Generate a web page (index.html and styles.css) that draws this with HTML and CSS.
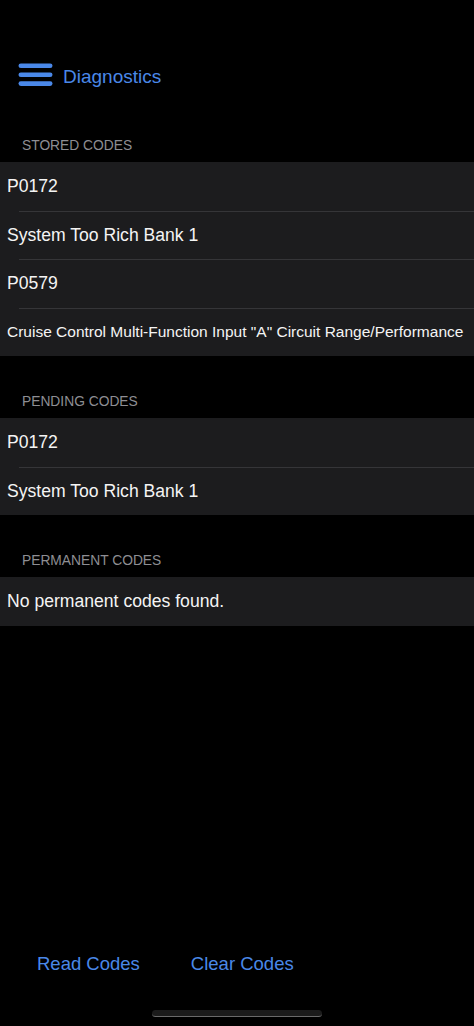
FILE: index.html
```html
<!DOCTYPE html>
<html lang="en">
<head>
<meta charset="utf-8">
<title>Diagnostics</title>
<link rel="stylesheet" href="styles.css">
</head>
<body>
<div class="screen">
  <header class="nav">
    <svg class="menu-icon" width="36" height="24" viewBox="0 0 36 24" aria-hidden="true">
      <rect x="0.5" y="0.5" width="34" height="4.6" rx="2.3" fill="#4a88e8"/>
      <rect x="0.5" y="9.5" width="34" height="4.6" rx="2.3" fill="#4a88e8"/>
      <rect x="0.5" y="18.3" width="34" height="4.6" rx="2.3" fill="#4a88e8"/>
    </svg>
    <span class="nav-title">Diagnostics</span>
  </header>

  <main class="content">
    <div class="section-header first">STORED CODES</div>
    <ul class="group">
      <li class="row">P0172</li>
      <li class="row">System Too Rich Bank 1</li>
      <li class="row">P0579</li>
      <li class="row small">Cruise Control Multi-Function Input "A" Circuit Range/Performance</li>
    </ul>

    <div class="section-header">PENDING CODES</div>
    <ul class="group">
      <li class="row">P0172</li>
      <li class="row">System Too Rich Bank 1</li>
    </ul>

    <div class="section-header">PERMANENT CODES</div>
    <ul class="group">
      <li class="row">No permanent codes found.</li>
    </ul>
  </main>

  <footer class="toolbar">
    <div class="actions">
      <button class="action">Read Codes</button>
      <button class="action">Clear Codes</button>
    </div>
    <div class="home-indicator"></div>
  </footer>
</div>
</body>
</html>
```

FILE: styles.css
```css
* { box-sizing: border-box; }

html, body {
  margin: 0;
  padding: 0;
  background: #000;
}

body {
  font-family: "Liberation Sans", Arial, sans-serif;
  color: #f4f4f4;
}

.screen {
  width: 474px;
  min-height: 1026px;
  display: flex;
  flex-direction: column;
}

.nav {
  display: flex;
  align-items: center;
  height: 44px;
  margin-top: 53px;
  padding-left: 18px;
}

.menu-icon {
  display: block;
  margin-right: 9px;
}

.nav-title {
  font-size: 19px;
  line-height: 24px;
  padding-top: 4px;
  color: #4a88e8;
}

.content {
  flex: 1;
}

.section-header {
  height: 62px;
  display: flex;
  align-items: flex-end;
  padding: 0 0 8px 22px;
  font-size: 13.8px;
  line-height: 16px;
  color: #8e8e93;
}

.section-header.first {
  height: 65px;
}

.group {
  list-style: none;
  margin: 0;
  padding: 0;
  background: #1c1c1e;
}

.row {
  height: 48.5px;
  display: flex;
  align-items: center;
  padding-left: 7px;
  font-size: 17.6px;
  white-space: nowrap;
}

.row + .row {
  border-top: 1px solid #353538;
  border-image: linear-gradient(to right, transparent 20px, #353538 20px) 1;
}

.row.small {
  font-size: 15.5px;
}

.toolbar {
  display: flex;
  flex-direction: column;
  align-items: stretch;
}

.actions {
  display: flex;
  gap: 51px;
  padding-left: 37px;
  height: 22px;
  align-items: center;
}

.action {
  background: none;
  border: 0;
  padding: 0;
  font-family: inherit;
  font-size: 18.5px;
  color: #4a88e8;
}

.home-indicator {
  align-self: center;
  width: 170px;
  height: 7px;
  margin: 35px 0 9px;
  border-radius: 4px;
  background: #1b1b1b;
  border-bottom: 1px solid #6a6a6a;
}
```
